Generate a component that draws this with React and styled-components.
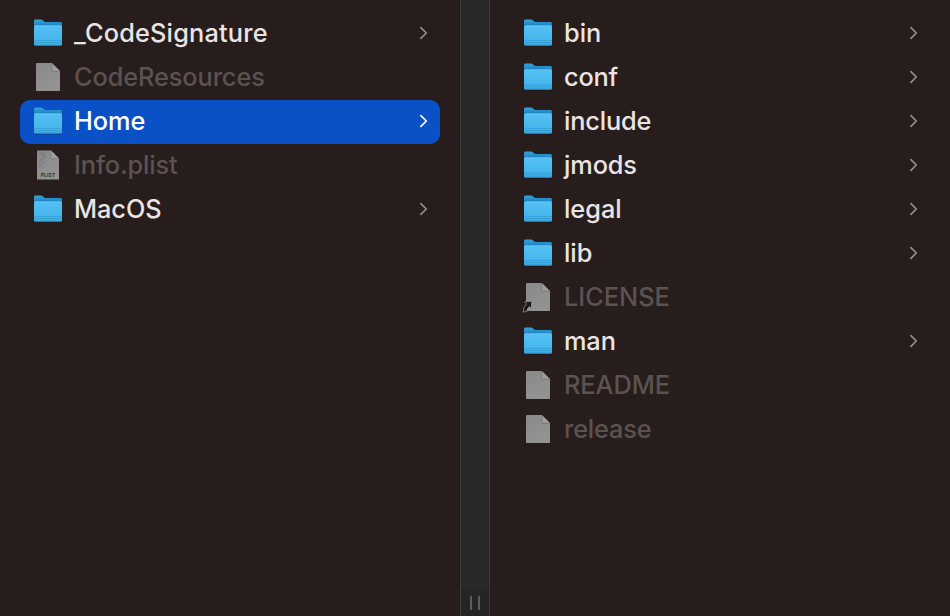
import React from 'react';
import styled, { createGlobalStyle } from 'styled-components';

const GlobalStyle = createGlobalStyle`
  * { box-sizing: border-box; }
  body { margin: 0; background: #281d1d; overflow: hidden; }
`;

const Browser = styled.main`
  display: grid;
  grid-template-columns: 460px 30px 460px;
  width: 950px;
  height: 616px;
  background: #281d1d;
  font-family: Inter, 'Liberation Sans', sans-serif;
`;

const Column = styled.ul`
  display: flex;
  flex-direction: column;
  margin: 0;
  padding: 12px 20px;
  list-style: none;
`;

const Row = styled.li`
  display: flex;
  align-items: center;
  height: 44px;
  flex: none;
  padding: 0 11px 2px 12px;
  border-radius: 10px;
  background: ${(p) => (p.$selected ? '#0a50c7' : 'transparent')};
  color: ${(p) => (p.$selected ? '#ffffff' : p.$dimmed ? '#5c5250' : '#e8e5e4')};
`;

const Icon = styled.svg`
  display: block;
  flex: none;
  width: 32px;
  height: 32px;
  overflow: visible;
`;

const Name = styled.span`
  flex: 1;
  margin-left: 10px;
  font-size: 25.3px;
  font-weight: 450;
  line-height: 32px;
  letter-spacing: ${(p) => p.$tracking}px;
  white-space: nowrap;
`;

const Chevron = styled.svg`
  display: block;
  flex: none;
  width: 12px;
  height: 16px;
  fill: none;
  stroke: ${(p) => (p.$selected ? '#ffffff' : '#968d8c')};
  stroke-width: 1.7;
  stroke-linecap: round;
  stroke-linejoin: round;
`;

const Divider = styled.div`
  display: flex;
  flex-direction: column;
  justify-content: flex-end;
  background: #292929;
  border-left: 1px solid #3b3d3c;
  border-right: 1px solid #373636;
`;

const Grip = styled.div`
  display: flex;
  justify-content: center;
  gap: 6px;
  height: 28px;
  padding-top: 8px;
  background: #252525;
`;

const GripBar = styled.span`
  width: 2px;
  height: 14px;
  background: #5d5d5d;
`;

function FolderIcon({ id }) {
  return (
    <Icon viewBox="0 0 32 32">
      <defs>
        <linearGradient id={`${id}-front`} x1="0" y1="0" x2="0" y2="1">
          <stop offset="0" stopColor="#54c1f3" />
          <stop offset="0.7" stopColor="#46b6ec" />
          <stop offset="1" stopColor="#3ba9e0" />
        </linearGradient>
        <linearGradient id={`${id}-back`} x1="0" y1="0" x2="0" y2="1">
          <stop offset="0" stopColor="#36a3dc" />
          <stop offset="0.25" stopColor="#1c80bb" />
        </linearGradient>
      </defs>
      <path d="M2.5 28.5h27v1h-27z" fill="#080b10" opacity="0.4" />
      <path d="M2 4Q2 2.600 3.500 2.600H9q1.200 0 2 .8l1.200 1q.8.600 1.800.600H28.500q1.500 0 1.500 1.500V26.500q0 2-2 2H4q-2 0-2-2z" fill={`url(#${id}-back)`} />
      <path d="M2 10Q2 8.500 3.500 8.500h25Q30 8.500 30 10V27.300q0 1.200-1.200 1.200H3.200Q2 28.500 2 27.300z" fill={`url(#${id}-front)`} />
      <path d="M3 8.900h26" stroke="#69cdf8" strokeWidth="0.7" />
      <path d="M2 23.500h28M2 25.500h28" stroke="#3198d2" strokeWidth="0.6" />
      <path d="M3 28.200h26" stroke="#2a86bd" strokeWidth="0.7" />
    </Icon>
  );
}

function DocumentIcon({ id, kind }) {
  const plist = kind === 'plist';
  const alias = kind === 'alias';
  return (
    <Icon viewBox="0 0 32 32">
      <defs>
        <linearGradient id={`${id}-page`} x1="0" y1="0" x2="0.5" y2="1">
          <stop offset="0" stopColor="#8a8989" />
          <stop offset="1" stopColor="#949393" />
        </linearGradient>
      </defs>
      <path
        d={plist
          ? 'M5.500 1.500H19L27 9.500V30q0 .5-.5.500H5.500Q5 30.500 5 30V2Q5 1.500 5.500 1.500z'
          : 'M5 2H19.800L28 10V29q0 1-1 1H5q-1 0-1-1V3q0-1 1-1z'}
        fill={`url(#${id}-page)`}
      />
      {plist ? (
        <>
          <path d="M19 1.500v7q0 1 1 1h7z" fill="#a3a2a2" />
          <path d="M19 1.500v7.200q0 .8.800.8H27" fill="none" stroke="#737171" strokeWidth="0.6" />
          <path d="M7 4h7M8 6h6M10 8h5M8 10h4M7 12h3M10 14h3M7 16h3M9 18h2" stroke="#737171" strokeWidth="0.8" />
          <text x="16" y="27.500" textAnchor="middle" textLength="14.500" fontFamily="Inter, sans-serif" fontSize="5" fontWeight="700" fill="#353333">PLIST</text>
        </>
      ) : (
        <>
          <path d="M20 2.200v6.800q0 1 1 1h6.800z" fill="#a09f9f" />
          <path d="M19.800 2.500v6.700q0 1 1 1h6.700" fill="none" stroke="#6b6969" strokeWidth="0.6" />
        </>
      )}
      {alias && (
        <path
          d="M2.700 20.800L9.800 20.200L9.200 27.500L7.200 25.600Q5 27.500 4.800 30.600L1.300 31Q.9 26.300 4.500 22.800z"
          fill="#1b1717"
          stroke="#a19f9f"
          strokeWidth="0.7"
        />
      )}
    </Icon>
  );
}

const bundleItems = [
  { name: '_CodeSignature', kind: 'folder', tracking: 0.2 },
  { name: 'CodeResources', kind: 'document', tracking: -0.08 },
  { name: 'Home', kind: 'folder', selected: true, tracking: 0 },
  { name: 'Info.plist', kind: 'plist', tracking: -0.1 },
  { name: 'MacOS', kind: 'folder', tracking: -0.05 },
];

const homeItems = [
  { name: 'bin', kind: 'folder', tracking: 0 },
  { name: 'conf', kind: 'folder', tracking: -0.2 },
  { name: 'include', kind: 'folder', tracking: -0.15 },
  { name: 'jmods', kind: 'folder', tracking: -0.1 },
  { name: 'legal', kind: 'folder', tracking: 0 },
  { name: 'lib', kind: 'folder', tracking: 0 },
  { name: 'LICENSE', kind: 'alias', tracking: 0 },
  { name: 'man', kind: 'folder', tracking: -0.1 },
  { name: 'README', kind: 'document', tracking: -0.05 },
  { name: 'release', kind: 'document', tracking: -0.15 },
];

function FileColumn({ items, label }) {
  return (
    <Column aria-label={label}>
      {items.map(({ name, kind, selected, tracking }) => {
        const folder = kind === 'folder';
        return (
          <Row key={name} $selected={selected} $dimmed={!folder}>
            {folder ? <FolderIcon id={`${label}-${name}`} /> : <DocumentIcon id={`${label}-${name}`} kind={kind} />}
            <Name $tracking={tracking}>{name}</Name>
            {folder && (
              <Chevron viewBox="0 0 12 16" $selected={selected}>
                <path d="M3.900 2.700L9.300 8L3.900 13.300" />
              </Chevron>
            )}
          </Row>
        );
      })}
    </Column>
  );
}

export default function App() {
  return (
    <>
      <GlobalStyle />
      <Browser>
        <FileColumn items={bundleItems} label="contents" />
        <Divider>
          <Grip>
            <GripBar />
            <GripBar />
          </Grip>
        </Divider>
        <FileColumn items={homeItems} label="home" />
      </Browser>
    </>
  );
}
